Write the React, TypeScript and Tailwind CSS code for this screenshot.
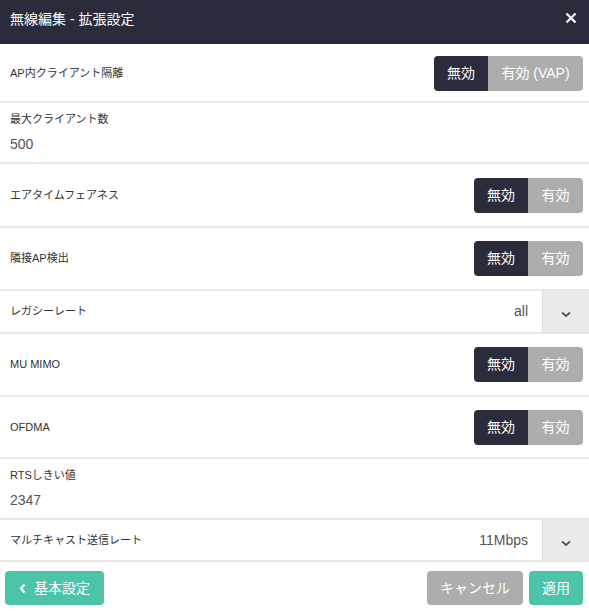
import React from "react";

const FONT = "font-['Liberation_Sans','Noto_Sans_CJK_JP',sans-serif]";

function Sep() {
  return <div className="h-[2px] bg-[#e8e8e8]" />;
}

function Toggle({ on, off, offW }: { on: string; off: string; offW: string }) {
  return (
    <div className="flex h-[35px] overflow-hidden rounded-[4px] text-[14px]">
      <div className="flex w-[54px] items-center justify-center bg-[#2a2b3b] text-white">{on}</div>
      <div className={`flex ${offW} items-center justify-center bg-[#adadad] text-white`}>{off}</div>
    </div>
  );
}

function ToggleRow({ label, h, off = "有効", offW = "w-[55px]" }: { label: string; h: string; off?: string; offW?: string }) {
  return (
    <div className={`flex ${h} items-center justify-between pl-[10px] pr-[6px]`}>
      <span className="text-[11px] text-[#333]">{label}</span>
      <Toggle on="無効" off={off} offW={offW} />
    </div>
  );
}

function InputRow({ label, value, h }: { label: string; value: string; h: string }) {
  return (
    <div className={`flex ${h} flex-col pl-[10px] pt-[8px]`}>
      <span className="h-[16px] text-[11px] leading-[16px] text-[#333]">{label}</span>
      <span className="mt-[7px] h-[20px] text-[14px] leading-[20px] text-[#555]">{value}</span>
    </div>
  );
}

function SelectRow({ label, value, h }: { label: string; value: string; h: string }) {
  return (
    <div className={`flex ${h} items-stretch`}>
      <div className="flex flex-1 items-center pl-[10px]">
        <span className="text-[11px] text-[#333]">{label}</span>
      </div>
      <div className="flex items-center pr-[14px] text-[14px] text-[#555]">{value}</div>
      <div className="flex w-[47px] items-center justify-center border-l border-[#dcdcdc] bg-[#ebebeb] pt-[6px]">
        <svg width="10" height="7" viewBox="0 0 10 7">
          <path d="M1 1.5 L5 5 L9 1.5" fill="none" stroke="#555" strokeWidth="1.8" />
        </svg>
      </div>
    </div>
  );
}

export default function App() {
  return (
    <div className={`${FONT} h-[613px] w-[589px] bg-white`}>
      <div className="flex h-[44px] items-start justify-between bg-[#2a2b3b] pl-[10px] pr-[12px] pt-[8px]">
        <span className="text-[14px] leading-[22px] text-white">無線編集 - 拡張設定</span>
        <svg width="12" height="12" viewBox="0 0 12 12" className="mt-[4px]">
          <path d="M1.5 1.5 L10.5 10.5 M10.5 1.5 L1.5 10.5" stroke="white" strokeWidth="2.2" />
        </svg>
      </div>
      <div className="flex h-[57px] items-center justify-between pl-[10px] pr-[6px] pt-[2px]">
        <span className="text-[11px] text-[#333]">AP内クライアント隔離</span>
        <Toggle on="無効" off="有効 (VAP)" offW="w-[95px]" />
      </div>
      <Sep />
      <InputRow label="最大クライアント数" value="500" h="h-[59px]" />
      <Sep />
      <ToggleRow label="エアタイムフェアネス" h="h-[62px]" />
      <Sep />
      <ToggleRow label="隣接AP検出" h="h-[61px]" />
      <Sep />
      <SelectRow label="レガシーレート" value="all" h="h-[41px]" />
      <Sep />
      <ToggleRow label="MU MIMO" h="h-[61px]" />
      <Sep />
      <ToggleRow label="OFDMA" h="h-[60px]" />
      <Sep />
      <InputRow label="RTSしきい値" value="2347" h="h-[59px]" />
      <Sep />
      <SelectRow label="マルチキャスト送信レート" value="11Mbps" h="h-[40px]" />
      <Sep />
      <div className="flex items-start justify-between pl-[5px] pr-[6px] pt-[9px]">
        <button className="flex h-[34px] w-[99px] items-center justify-center gap-[8px] rounded-[4px] bg-[#4dc4a9] text-[14px] text-white">
          <svg width="7" height="11" viewBox="0 0 7 11">
            <path d="M5.5 1.5 L2 5.5 L5.5 9.5" fill="none" stroke="white" strokeWidth="2.2" />
          </svg>
          <span>基本設定</span>
        </button>
        <div className="flex gap-[6px]">
          <button className="flex h-[34px] w-[96px] items-center justify-center rounded-[4px] bg-[#adadad] text-[14px] text-white">キャンセル</button>
          <button className="flex h-[34px] w-[54px] items-center justify-center rounded-[4px] bg-[#4dc4a9] text-[14px] text-white">適用</button>
        </div>
      </div>
    </div>
  );
}
